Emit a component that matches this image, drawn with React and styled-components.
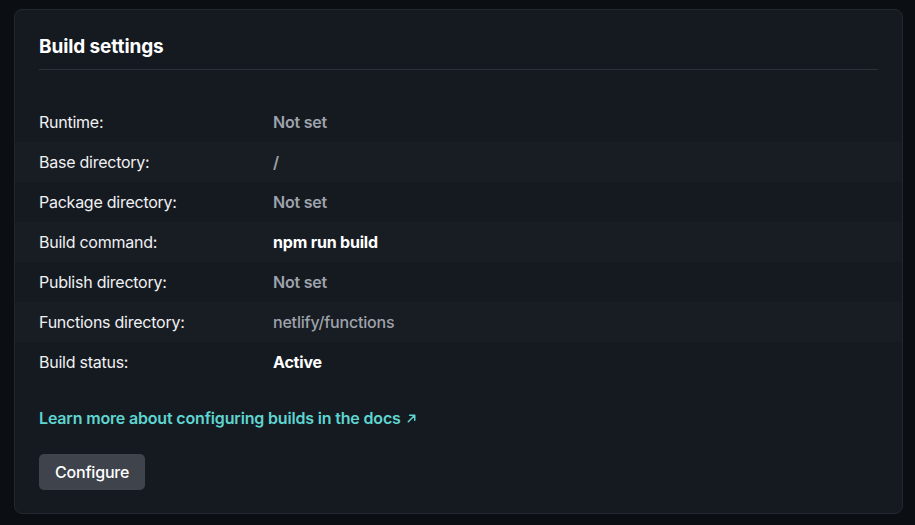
import React from 'react'
import styled, { createGlobalStyle } from 'styled-components'

const GlobalStyle = createGlobalStyle`
  html, body {
    margin: 0;
    padding: 0;
    background: #0b0e13;
  }
  body {
    font-family: Inter, 'Liberation Sans', sans-serif;
    -webkit-font-smoothing: antialiased;
  }
`

const Page = styled.div`
  padding: 9px 12px 10px 14px;
`

const Card = styled.section`
  background: #151a21;
  border: 1px solid #232830;
  border-radius: 8px;
  padding: 25px 0 23px;
`

const Header = styled.div`
  margin: 0 24px;
  padding-bottom: 10px;
  border-bottom: 1px solid #2c3139;
`

const Title = styled.h2`
  margin: 0;
  font-size: 19px;
  line-height: 24px;
  font-weight: 700;
  letter-spacing: -0.1px;
  color: #ffffff;
`

const List = styled.dl`
  margin: 32px 0 0;
`

const Row = styled.div`
  display: grid;
  grid-template-columns: 234px 1fr;
  align-items: center;
  height: 40px;
  padding: 0 24px;
  background: ${(p) => (p.$striped ? '#181c23' : 'transparent')};
`

const Label = styled.dt`
  margin: 0;
  font-size: 16px;
  line-height: 20px;
  letter-spacing: -0.25px;
  color: #f0f1f3;
`

const weights = { strong: 700, muted: 600, plain: 500 }

const Value = styled.dd`
  margin: 0;
  font-size: 16px;
  line-height: 20px;
  letter-spacing: -0.2px;
  font-weight: ${(p) => weights[p.$tone]};
  color: ${(p) => (p.$tone === 'strong' ? '#ffffff' : '#9ea3ab')};
`

const Footer = styled.div`
  margin: 26px 24px 0;
  display: flex;
  flex-direction: column;
  align-items: flex-start;
  gap: 26px;
`

const DocsLink = styled.a`
  display: inline-flex;
  align-items: center;
  gap: 5px;
  font-size: 16px;
  line-height: 20px;
  font-weight: 600;
  letter-spacing: -0.17px;
  color: #5fd5d0;
  text-decoration: none;
`

const Button = styled.button`
  height: 36px;
  padding: 0 16px;
  border: none;
  border-radius: 5px;
  background: #3e434c;
  color: #ffffff;
  font-family: inherit;
  font-size: 16px;
  font-weight: 500;
  letter-spacing: -0.2px;
`

const rows = [
  { label: 'Runtime:', value: 'Not set', tone: 'muted' },
  { label: 'Base directory:', value: '/', tone: 'muted' },
  { label: 'Package directory:', value: 'Not set', tone: 'muted' },
  { label: 'Build command:', value: 'npm run build', tone: 'strong' },
  { label: 'Publish directory:', value: 'Not set', tone: 'muted' },
  { label: 'Functions directory:', value: 'netlify/functions', tone: 'plain' },
  { label: 'Build status:', value: 'Active', tone: 'strong' },
]

export default function App() {
  return (
    <Page>
      <GlobalStyle />
      <Card>
        <Header>
          <Title>Build settings</Title>
        </Header>
        <List>
          {rows.map((r, i) => (
            <Row key={r.label} $striped={i % 2 === 1}>
              <Label>{r.label}</Label>
              <Value $tone={r.tone}>{r.value}</Value>
            </Row>
          ))}
        </List>
        <Footer>
          <DocsLink href="#">
            Learn more about configuring builds in the docs
            <svg width="11" height="11" viewBox="0 0 12 12" fill="none" stroke="currentColor" strokeWidth="1.7" strokeLinecap="round" strokeLinejoin="round">
              <path d="M2.5 9.5L9.5 2.5M4 2.5H9.5V8" />
            </svg>
          </DocsLink>
          <Button>Configure</Button>
        </Footer>
      </Card>
    </Page>
  )
}
